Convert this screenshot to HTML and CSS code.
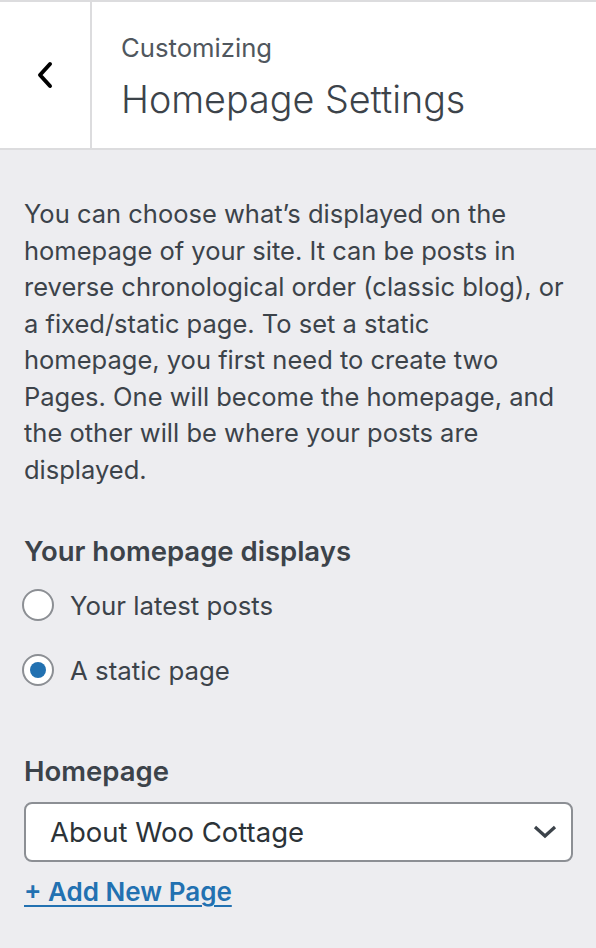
FILE: index.html
```html
<!DOCTYPE html>
<html lang="en">
<head>
    <meta charset="UTF-8">
    <meta name="viewport" content="width=device-width, initial-scale=1.0">
    <title>Customizing Homepage Settings</title>
    <link rel="stylesheet" href="styles.css">
</head>
<body>

    <div class="panel">
        <div class="panel-header">
            <button class="back-btn" aria-label="Back">
                <svg width="20" height="30" viewBox="0 0 20 30">
                    <path d="M15 4 L5 15 L15 26" fill="none" stroke="#000" stroke-width="4" stroke-linecap="round" stroke-linejoin="round"/>
                </svg>
            </button>
            <div class="panel-title">
                <div class="panel-action">Customizing</div>
                <h1>Homepage Settings</h1>
            </div>
        </div>

        <div class="panel-body">
            <p class="description">You can choose what’s displayed on the homepage of your site. It can be posts in reverse chronological order (classic blog), or a fixed/static page. To set a static homepage, you first need to create two Pages. One will become the homepage, and the other will be where your posts are displayed.</p>

            <div class="control">
                <span class="control-title">Your homepage displays</span>
                <label class="radio-row">
                    <input type="radio" name="show_on_front" value="posts">
                    <span>Your latest posts</span>
                </label>
                <label class="radio-row">
                    <input type="radio" name="show_on_front" value="page" checked>
                    <span>A static page</span>
                </label>
            </div>

            <div class="control">
                <span class="control-title">Homepage</span>
                <div class="select">
                    <span>About Woo Cottage</span>
                    <svg width="24" height="14" viewBox="0 0 24 14">
                        <path d="M2 2 L12 11 L22 2" fill="none" stroke="#3c434a" stroke-width="3.2"/>
                    </svg>
                </div>
                <a class="add-new" href="#">+ Add New Page</a>
            </div>
        </div>
    </div>

</body>
</html>
```

FILE: styles.css
```css
body {
    margin: 0;
    font-family: Inter, "Noto Sans", sans-serif;
    background: #ededf0;
    color: #3c434a;
}

.panel {
    width: 596px;
    min-height: 948px;
    border-top: 2px solid #dcdcde;
}

.panel-header {
    display: flex;
    height: 146px;
    background: #fff;
    border-bottom: 2px solid #dcdcde;
}

.back-btn {
    width: 92px;
    flex-shrink: 0;
    display: flex;
    align-items: center;
    justify-content: center;
    padding: 0;
    background: #fff;
    border: 0;
    border-right: 2px solid #dcdcde;
    cursor: pointer;
}

.panel-title {
    padding: 30px 0 0 29px;
}

.panel-action {
    font-size: 25.7px;
    line-height: 32px;
    color: #50575e;
}

.panel-title h1 {
    margin: 11px 0 0;
    font-size: 37.7px;
    font-weight: 300;
    line-height: 48px;
    color: #3c434a;
}

.panel-body {
    padding: 46px 24px 24px;
}

.description {
    margin: 0;
    font-size: 25.5px;
    line-height: 36.5px;
    color: #3c434a;
}

.control {
    display: flex;
    flex-direction: column;
    align-items: flex-start;
    margin-top: 43px;
}

.control-title {
    font-size: 27.5px;
    font-weight: 600;
    line-height: 40px;
    margin-bottom: 9px;
}

.radio-row {
    display: flex;
    align-items: center;
    gap: 16px;
    height: 50px;
    font-size: 25.8px;
    color: #3c434a;
}

.radio-row + .radio-row {
    margin-top: 15px;
}

.radio-row input {
    appearance: none;
    width: 32px;
    height: 32px;
    margin: 0 0 0 -2px;
    border: 2px solid #8c8f94;
    border-radius: 50%;
    background: #fff;
    display: grid;
    place-content: center;
}

.radio-row input:checked::before {
    content: "";
    width: 16px;
    height: 16px;
    border-radius: 50%;
    background: #2271b1;
}

.control + .control {
    margin-top: 56px;
}

.control + .control .control-title {
    margin-bottom: 0;
}

.select {
    align-self: stretch;
    display: flex;
    align-items: center;
    justify-content: space-between;
    height: 56px;
    margin-top: 11px;
    margin-right: -1px;
    padding: 0 14px 0 24px;
    background: #fff;
    border: 2px solid #8c8f94;
    border-radius: 8px;
    font-size: 27.5px;
    color: #2c3338;
}

.add-new {
    margin-top: 14px;
    font-size: 26px;
    font-weight: 600;
    line-height: 32px;
    color: #2271b1;
    text-decoration-thickness: 2px;
    text-underline-offset: 4px;
}
```
